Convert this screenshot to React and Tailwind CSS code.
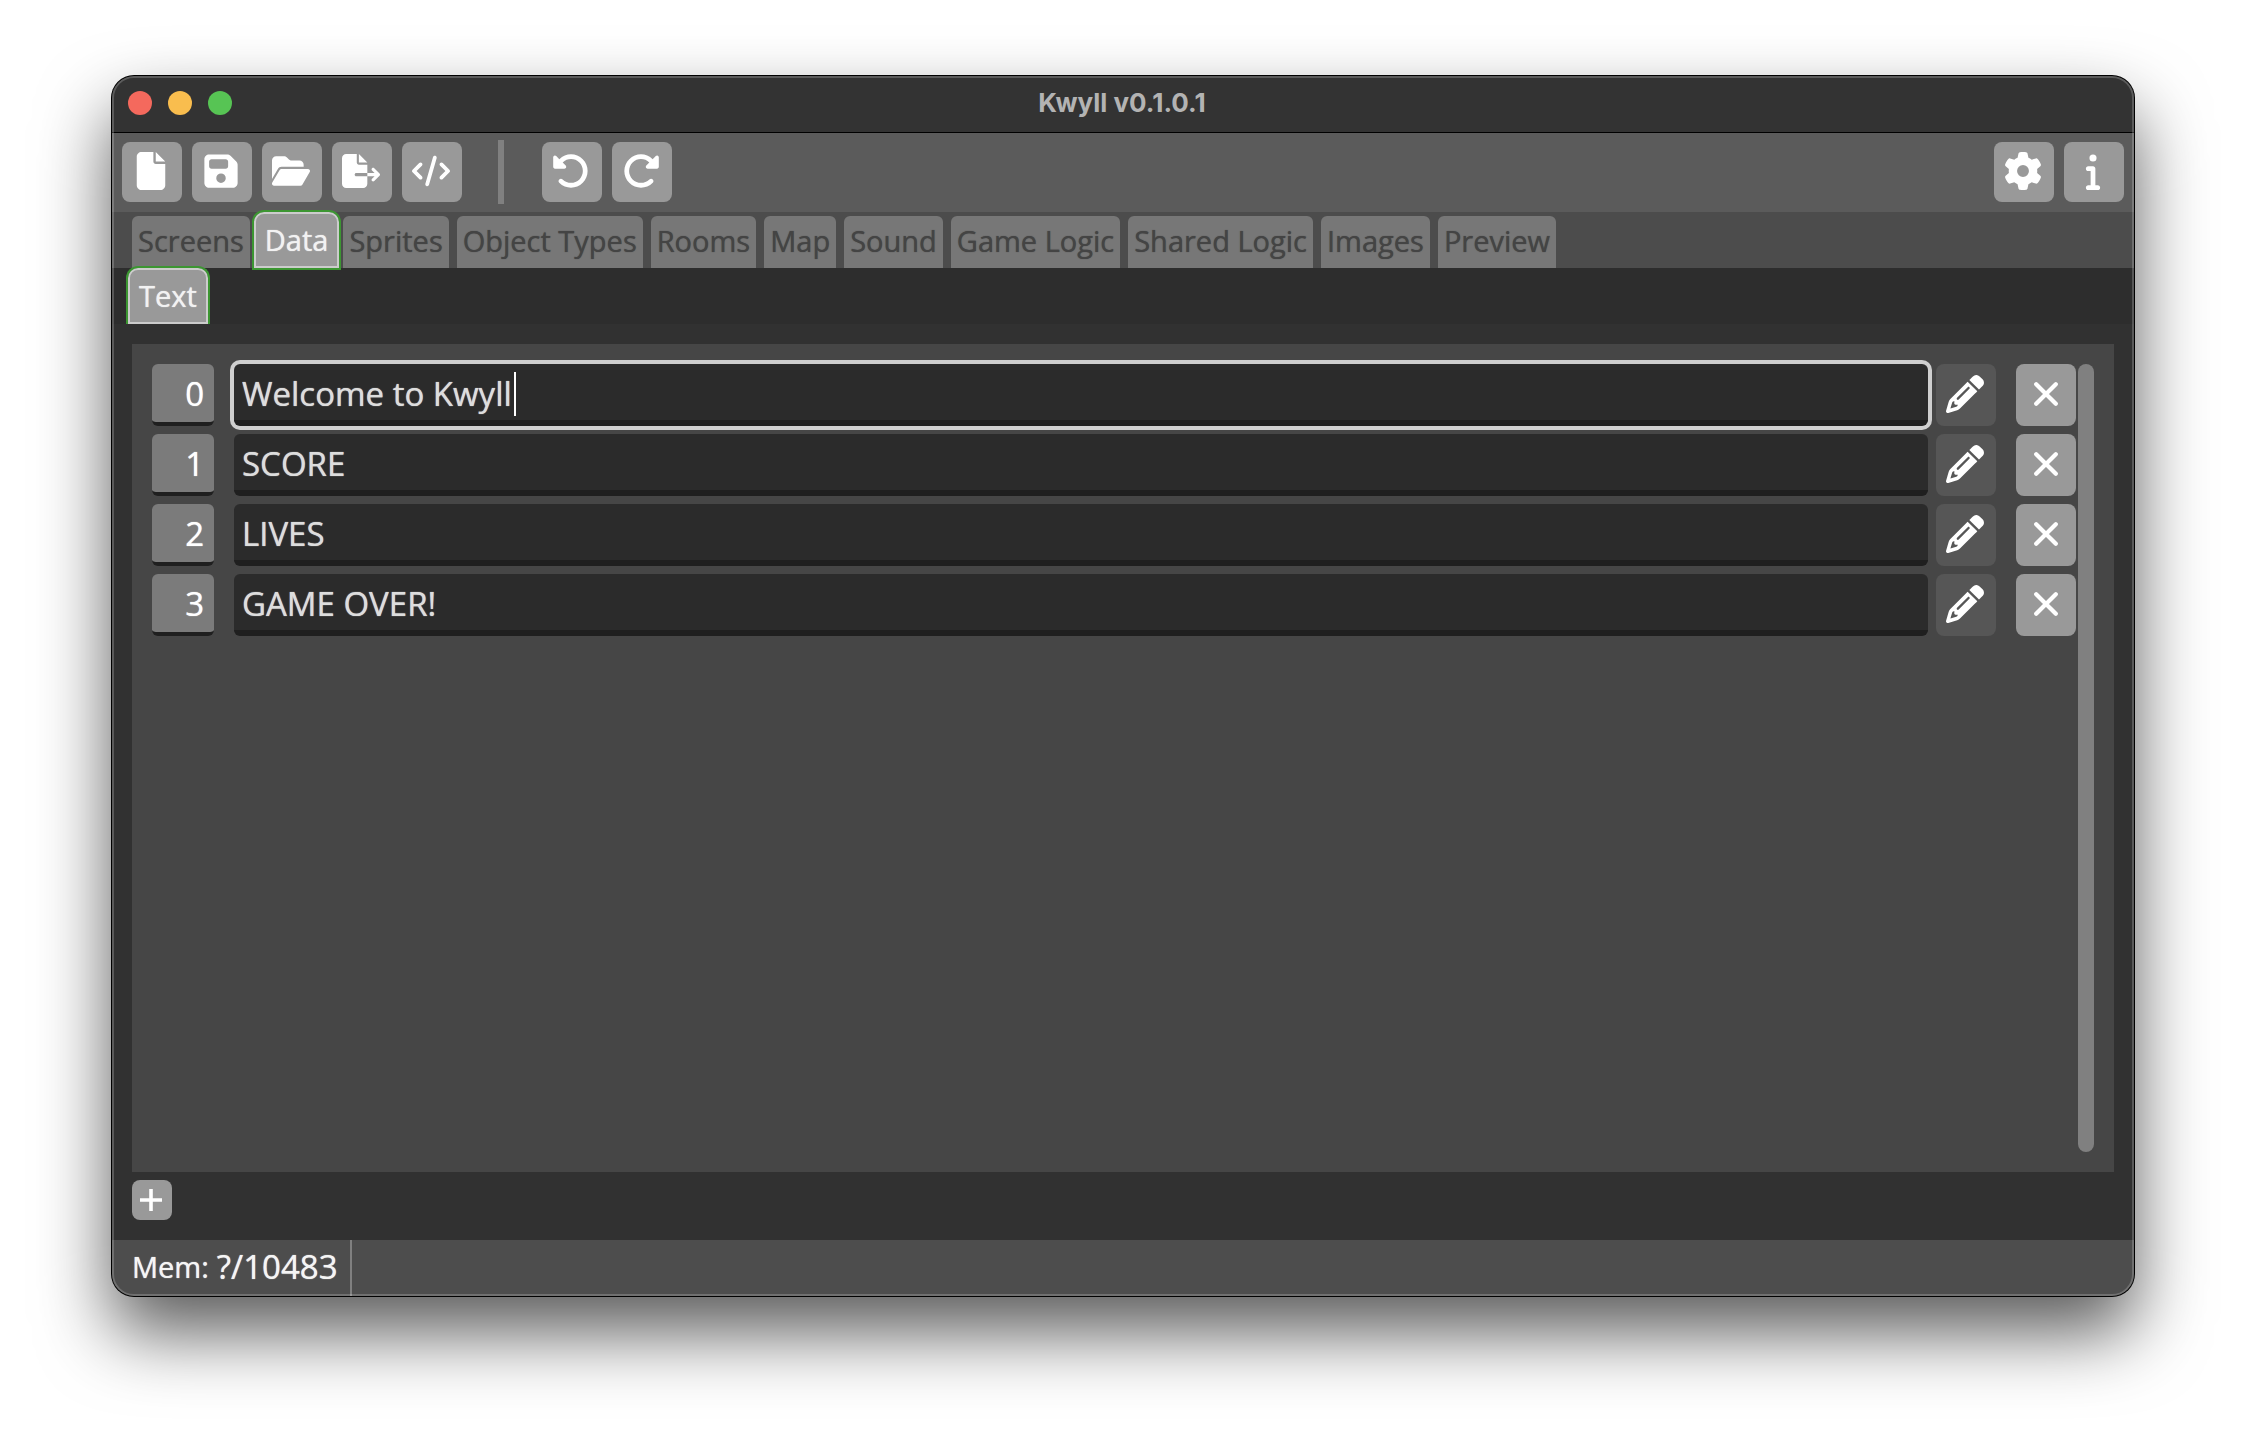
import { useState } from 'react';
import {
  FaCode,
  FaFile,
  FaFileExport,
  FaFloppyDisk,
  FaFolderOpen,
  FaGear,
  FaInfo,
  FaPencil,
  FaRotateLeft,
  FaRotateRight
} from 'react-icons/fa6';

const fileActions = [
  { name: 'New', icon: FaFile },
  { name: 'Save', icon: FaFloppyDisk },
  { name: 'Open', icon: FaFolderOpen },
  { name: 'Export', icon: FaFileExport },
  { name: 'Code', icon: FaCode }
];

const historyActions = [
  { name: 'Undo', icon: FaRotateLeft },
  { name: 'Redo', icon: FaRotateRight }
];

const appActions = [
  { name: 'Settings', icon: FaGear },
  { name: 'About', icon: FaInfo }
];

const tabs = [
  'Screens',
  'Data',
  'Sprites',
  'Object Types',
  'Rooms',
  'Map',
  'Sound',
  'Game Logic',
  'Shared Logic',
  'Images',
  'Preview'
];

const initialTexts = ['Welcome to Kwyll', 'SCORE', 'LIVES', 'GAME OVER!'];

function CrossIcon() {
  return (
    <svg viewBox="0 0 24 26" className="h-[26px] w-6" aria-hidden="true">
      <path d="M2.2 3.2 21.8 22.8M21.8 3.2 2.2 22.8" stroke="currentColor" strokeWidth="4.2" strokeLinecap="round" />
    </svg>
  );
}

function PlusIcon() {
  return (
    <svg viewBox="0 0 22 22" className="size-[22px]" aria-hidden="true">
      <path d="M11 0V22M0 11H22" stroke="currentColor" strokeWidth="3.6" />
    </svg>
  );
}

function ToolGroup({ actions }) {
  return (
    <div className="flex gap-[10px]">
      {actions.map(({ name, icon: Icon }) => (
        <button
          key={name}
          type="button"
          aria-label={name}
          className="flex size-[60px] items-center justify-center rounded-lg bg-[#999999] pr-[2px] pb-[2px] text-white"
        >
          <Icon className="h-[38px] w-auto" />
        </button>
      ))}
    </div>
  );
}

function TitleBar() {
  return (
    <header className="flex h-[57px] items-center border-b border-black bg-[#333333] px-4 pb-[2px]">
      <div className="flex gap-4">
        <span className="size-6 rounded-full bg-[#f4695d]" />
        <span className="size-6 rounded-full bg-[#f9bd4e]" />
        <span className="size-6 rounded-full bg-[#57c454]" />
      </div>
      <h1 className="flex-1 pr-[106px] text-center font-['Inter',sans-serif] text-[26px] leading-8 font-bold text-[#b3b3b3] text-shadow-none">
        Kwyll v0.1.0.1
      </h1>
    </header>
  );
}

function TextRow({ index, value, focused, onChange, onFocus, onRemove }) {
  return (
    <li className="flex h-[62px]">
      <label
        htmlFor={`text-${index}`}
        className="mr-5 w-[62px] rounded-md border-b-4 border-[#1f1f1f] bg-[#7b7b7b] pr-[10px] text-right text-[33px] leading-[59px] text-white"
      >
        {index}
      </label>
      <div className="relative mr-2 flex flex-1">
        <input
          id={`text-${index}`}
          type="text"
          value={value}
          onChange={onChange}
          onFocus={onFocus}
          className={`w-full rounded-md border-b-[6px] border-[#1f1f1f] bg-[#2b2b2b] px-2 pt-1 text-[33px] text-[#dddddd] caret-transparent outline-none text-shadow-[0_0_1px_currentColor] ${
            focused ? 'ring-4 ring-[#cfcfcf]' : ''
          }`}
        />
        {focused && <span className="absolute top-2 left-[280px] h-11 w-[2px] bg-white" />}
      </div>
      <button
        type="button"
        aria-label={`Edit text ${index}`}
        className="mr-5 flex w-[60px] items-center justify-center rounded-lg bg-[#565656] pr-[2px] pb-[2px] text-white"
      >
        <FaPencil className="h-[38px] w-auto" />
      </button>
      <button
        type="button"
        aria-label={`Delete text ${index}`}
        onClick={onRemove}
        className="flex w-[60px] items-center justify-center rounded-lg bg-[#999999] pb-[2px] text-white"
      >
        <CrossIcon />
      </button>
    </li>
  );
}

function App() {
  const [activeTab, setActiveTab] = useState('Data');
  const [texts, setTexts] = useState(initialTexts);
  const [focusedRow, setFocusedRow] = useState(0);

  const handleChange = (index, value) =>
    setTexts((current) => current.map((text, i) => (i === index ? value : text)));
  const handleRemove = (index) => setTexts((current) => current.filter((_, i) => i !== index));
  const handleAdd = () => setTexts((current) => [...current, '']);

  return (
    <div className="flex min-h-screen bg-white px-28 pt-[76px] pb-[148px] font-['Open_Sans',sans-serif] text-shadow-[0_0_1px_currentColor]">
      <div className="relative flex flex-1 flex-col overflow-clip rounded-[22px] bg-[#313131] shadow-[0_0_0_1px_#000000,0_36px_72px_rgba(0,0,0,0.65)] after:pointer-events-none after:absolute after:inset-0 after:rounded-[22px] after:border-2 after:border-white/20">
        <TitleBar />

        <div className="flex h-[79px] items-center bg-[#5b5b5b] px-[10px] pb-[2px]">
          <ToolGroup actions={fileActions} />
          <span className="mr-[38px] ml-9 h-16 w-[6px] bg-[#808080]" />
          <ToolGroup actions={historyActions} />
          <div className="ml-auto">
            <ToolGroup actions={appActions} />
          </div>
        </div>

        <nav className="flex h-14 items-end gap-2 bg-[#4c4c4c] px-5">
          {tabs.map((tab) => (
            <button
              key={tab}
              type="button"
              onClick={() => setActiveTab(tab)}
              className={`text-[29px] whitespace-nowrap text-shadow-[0_0_1px_currentColor] ${
                tab === activeTab
                  ? 'relative z-10 -mx-[6px] -mb-[2px] h-[60px] rounded-t-xl border-2 border-[#3c9632] bg-[#999999] px-[11px] leading-[52px] text-[#f2f2f2] inset-shadow-[0_0_0_2px_#cccccc]'
                  : 'h-[52px] rounded-t-md bg-[#777777] px-[6px] pb-[2px] leading-[50px] text-[#444444]'
              }`}
            >
              {tab}
            </button>
          ))}
        </nav>

        <nav className="flex h-14 items-end bg-[#2d2d2d] px-[14px]">
          <button
            type="button"
            className="relative z-10 h-[58px] rounded-t-xl border-2 border-b-0 border-[#3c9632] bg-[#999999] px-[11px] text-[29px] leading-[52px] text-[#f2f2f2] inset-shadow-[0_0_0_2px_#cccccc] text-shadow-[0_0_1px_currentColor]"
          >
            Text
          </button>
        </nav>

        <main className="flex flex-1 flex-col px-5 py-5">
          <section className="flex flex-1 bg-[#464646] p-5">
            <ul className="mr-[2px] flex flex-1 flex-col gap-2">
              {texts.map((text, index) => (
                <TextRow
                  key={index}
                  index={index}
                  value={text}
                  focused={index === focusedRow}
                  onChange={(event) => handleChange(index, event.target.value)}
                  onFocus={() => setFocusedRow(index)}
                  onRemove={() => handleRemove(index)}
                />
              ))}
            </ul>
            <div className="w-4 rounded-full bg-[#808080]" />
          </section>
          <button
            type="button"
            aria-label="Add text"
            onClick={handleAdd}
            className="mt-2 flex size-10 items-center justify-center rounded-lg bg-[#999999] pr-[2px] text-white"
          >
            <PlusIcon />
          </button>
        </main>

        <footer className="flex h-14 items-center bg-[#4d4d4d] pl-5 text-[#f5f5f5]">
          <div className="flex h-full items-center gap-2 border-r-2 border-[#808080] pr-3 pb-[2px]">
            <span className="text-[29px]">Mem:</span>
            <span className="text-[33px]">?/10483</span>
          </div>
        </footer>
      </div>
    </div>
  );
}

export default App;
